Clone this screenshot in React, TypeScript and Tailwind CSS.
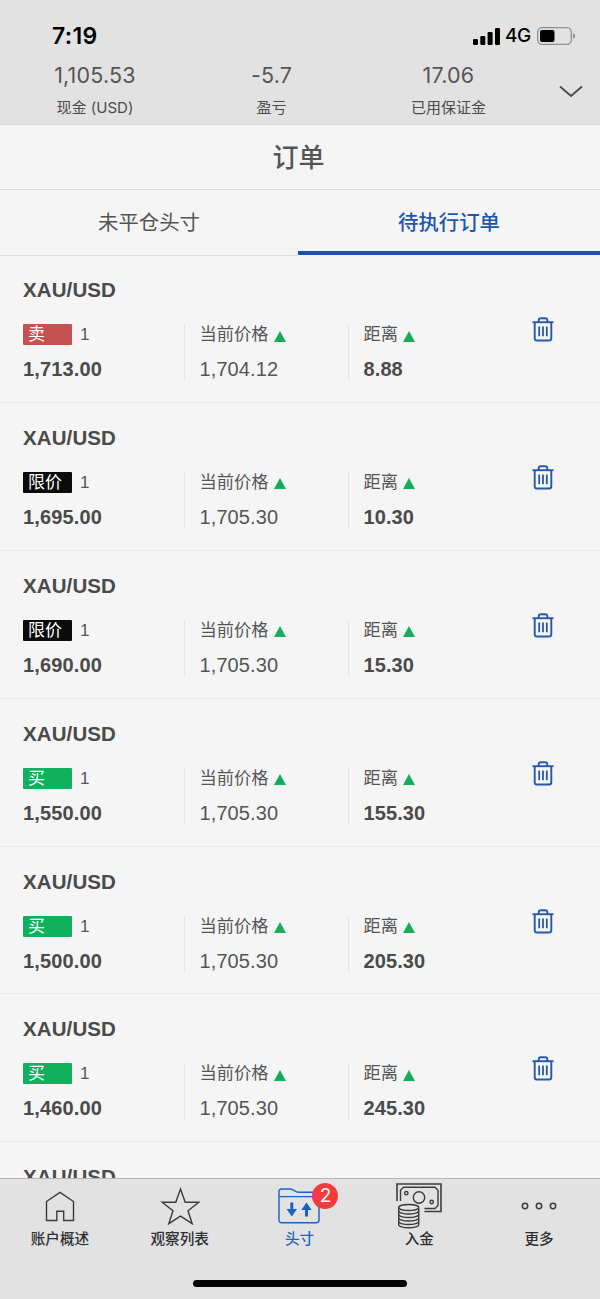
import type { ReactNode } from 'react'
import clsx from 'clsx'

type OrderKind = 'sell' | 'limit' | 'buy'

interface Order {
    kind: OrderKind
    price: string
    current: string
    distance: string
}

const orders: Order[] = [
    { kind: 'sell', price: '1,713.00', current: '1,704.12', distance: '8.88' },
    { kind: 'limit', price: '1,695.00', current: '1,705.30', distance: '10.30' },
    { kind: 'limit', price: '1,690.00', current: '1,705.30', distance: '15.30' },
    { kind: 'buy', price: '1,550.00', current: '1,705.30', distance: '155.30' },
    { kind: 'buy', price: '1,500.00', current: '1,705.30', distance: '205.30' },
    { kind: 'buy', price: '1,460.00', current: '1,705.30', distance: '245.30' },
]

const kinds = {
    sell: { label: '卖', bg: 'bg-[#c65052]' },
    limit: { label: '限价', bg: 'bg-[#0b0b0b]' },
    buy: { label: '买', bg: 'bg-[#10b05c]' },
}

function StatusBar() {
    return (
        <div className="flex h-[54px] items-start justify-between pt-[22px] pr-[24px] pl-[52px] text-black">
            <span className="text-[23px] leading-7 font-semibold tracking-[0.3px]">7:19</span>
            <div className="flex h-7 items-center">
                <svg width="27" height="17" viewBox="0 0 27 17" fill="currentColor">
                    <rect x="0" y="11" width="5" height="6" rx="1.2" />
                    <rect x="7.3" y="8" width="5" height="9" rx="1.2" />
                    <rect x="14.6" y="4" width="5" height="13" rx="1.2" />
                    <rect x="22" y="0" width="5" height="17" rx="1.2" />
                </svg>
                <span className="ml-[5px] w-[26px] text-[19px] leading-7 font-medium tracking-[-0.5px]">4G</span>
                <svg className="ml-[6px]" width="39" height="18" viewBox="0 0 39 18">
                    <rect x="0.7" y="0.7" width="33.6" height="16.6" rx="4.5" fill="none" stroke="#8f8f8f" strokeWidth="1.3" />
                    <rect x="3" y="3" width="14.5" height="12" rx="2" fill="#000" />
                    <path d="M36 6.2c1.6.6 2.2 1.6 2.2 2.8s-.6 2.2-2.2 2.8z" fill="#8f8f8f" />
                </svg>
            </div>
        </div>
    )
}

function Stat({ value, label, className }: { value: string; label: string; className: string }) {
    return (
        <div className={clsx('flex flex-col items-center text-[#555]', className)}>
            <span className="h-[43px] text-[21.5px] leading-[43px] tracking-[0.2px]">{value}</span>
            <span className="text-[15px] leading-[22px] whitespace-nowrap text-[#4c4c4c]">{label}</span>
        </div>
    )
}

function AccountSummary() {
    return (
        <div className="flex h-[70px]">
            <Stat className="w-[190px]" value="1,105.53" label="现金 (USD)" />
            <Stat className="w-[163px]" value="-5.7" label="盈亏" />
            <Stat className="w-[191px]" value="17.06" label="已用保证金" />
            <svg className="mt-[31px] ml-[15px]" width="24" height="13" viewBox="0 0 24 13" fill="none" stroke="#4a4a4a" strokeWidth="1.8">
                <path d="M1 1.5 12 11 23 1.5" />
            </svg>
        </div>
    )
}

function UpArrow() {
    return (
        <svg width="12" height="11" viewBox="0 0 12 11" fill="#17ab5b">
            <path d="M6 0 12 11H0z" />
        </svg>
    )
}

function TrashIcon() {
    return (
        <svg width="22" height="25" viewBox="0 0 22 25" fill="none" stroke="#2459a9" strokeWidth="1.9">
            <path d="M0.5 5.2h21" />
            <path d="M6.7 5V3.5c0-1.4.8-2.3 2.2-2.3h4.2c1.4 0 2.2.9 2.2 2.3V5" />
            <path d="M2.7 5.2v16.3c0 1.3.7 2 2 2h12.600c1.300 0 2-.7 2-2V5.200" />
            <path d="M7.200 9.500v9.800M11 9.500v9.800M14.800 9.500v9.800" strokeWidth="1.8" />
        </svg>
    )
}

function Quote({ label, value, bold, className }: { label: string; value: string; bold?: boolean; className?: string }) {
    return (
        <div className={clsx('border-l border-[#e6e6e6] pl-[14.5px]', className)}>
            <div className="flex h-[21px] items-center gap-[5px] text-[17.3px] text-[#555]">
                <span className="leading-[21px]">{label}</span>
                <span className="pt-[3px]"><UpArrow /></span>
            </div>
            <div className={clsx('mt-3.5 h-5 text-[20px] leading-5', bold ? 'font-bold tracking-[0.1px] text-[#4a4a4a]' : 'tracking-[0.1px] text-[#555]')}>
                {value}
            </div>
        </div>
    )
}

function OrderRow({ order }: { order: Order }) {
    const kind = kinds[order.kind]

    return (
        <li className="flex h-[147.9px] shrink-0 border-b border-[#eaeaea] pl-[23px] font-['Liberation_Sans','Noto_Sans_CJK_SC',sans-serif]">
            <div className="w-[508.5px] pt-[25px]">
                <div className="text-[20.5px] leading-5 font-bold tracking-[0.1px] text-[#4a4a4a]">XAU/USD</div>
                <div className="mt-6 flex h-[57px]">
                    <div className="w-[161px]">
                        <div className="flex h-[21px] items-center gap-2">
                            <span className={clsx('h-[21px] w-[49px] rounded-[1px] pl-[5px] text-[17px] leading-[21px] text-white', kind.bg)}>
                                {kind.label}
                            </span>
                            <span className="text-[17px] leading-[21px] text-[#555]">1</span>
                        </div>
                        <div className="mt-3.5 text-[20px] leading-5 font-bold tracking-[0.15px] text-[#4a4a4a]">{order.price}</div>
                    </div>
                    <Quote className="w-[164px]" label="当前价格" value={order.current} />
                    <Quote label="距离" value={order.distance} bold />
                </div>
            </div>
            <button className="mt-[62px] h-[25px]" aria-label="delete">
                <TrashIcon />
            </button>
        </li>
    )
}

function HomeIcon() {
    return (
        <svg width="30" height="32" viewBox="0 0 30 32" fill="none" stroke="#3c3c3f" strokeWidth="1.4">
            <path d="M1.5 11.500 15 2.300l13.500 9.200v19H18.700v-9.200h-6.900v9.200H1.500z" />
        </svg>
    )
}

function StarIcon() {
    return (
        <svg width="40" height="38" viewBox="0 0 40 38" fill="none" stroke="#3c3c3f" strokeWidth="1.4">
            <path d="m20.500 2 4.700 13.200h13.700L28 23.700l4.200 13-11.700-7.500-11.700 7.500 4.200-13L2.100 15.200h13.700z" />
        </svg>
    )
}

function PositionsIcon() {
    return (
        <svg width="42" height="36" viewBox="0 0 42 36" fill="none" stroke="#1a61c7" strokeWidth="1.4">
            <path d="M1 9V3.500C1 2 1.800 1 3.300 1H12c1.800 0 3 .5 4.500 1.700S19 4.200 21 4.200h20V32c0 1.800-.9 2.700-2.700 2.700H3.700C1.900 34.700 1 33.800 1 32V8.600h40" />
            <path d="M12.300 14.500h3v6.500h3.700l-5.200 7.500L8.600 21h3.700zM27 28.500h3V22h3.700l-5.200-7.500L23.300 22H27z" fill="#1a61c7" stroke="none" />
        </svg>
    )
}

function DepositIcon() {
    return (
        <svg width="46" height="46" viewBox="0 0 46 46" fill="none" stroke="#3c3c3f" strokeWidth="1.4">
            <path d="M1 18V1h44v27.500H28.500" strokeWidth="1.6" />
            <path d="M4.500 18V7.300l3-3H39l3 3v15.200l-3 3H28.500" />
            <circle cx="23" cy="14.500" r="5.700" />
            <circle cx="10.300" cy="10.200" r="1.700" />
            <circle cx="35.700" cy="19" r="1.700" />
            <ellipse cx="12.700" cy="24.500" rx="10" ry="3" />
            <path d="M2.700 24.500v17.300c0 1.600 4.500 3 10 3s10-1.400 10-3V24.500" />
            <path d="M2.700 28c0 1.600 4.500 3 10 3s10-1.400 10-3M2.700 31.500c0 1.600 4.500 3 10 3s10-1.400 10-3M2.700 35c0 1.600 4.500 3 10 3s10-1.400 10-3M2.700 38.500c0 1.600 4.500 3 10 3s10-1.400 10-3" />
        </svg>
    )
}

function MoreIcon() {
    return (
        <svg width="36" height="8" viewBox="0 0 36 8" fill="none" stroke="#3c3c3f" strokeWidth="1.5">
            <circle cx="4" cy="4" r="2.700" />
            <circle cx="18" cy="4" r="2.700" />
            <circle cx="32" cy="4" r="2.700" />
        </svg>
    )
}

interface NavItemProps {
    icon: ReactNode
    label: string
    active?: boolean
    badge?: number
}

function NavItem({ icon, label, active, badge }: NavItemProps) {
    return (
        <div className={clsx('flex flex-1 flex-col items-center', active ? 'text-[#1f62c0]' : 'text-[#2f2f32]')}>
            <div className="relative mt-1 flex h-[46px] items-center justify-center">
                {icon}
                {badge && (
                    <span className="absolute top-0 -right-[18px] h-[26px] w-[26px] rounded-full bg-[#f73b3b] text-center text-[19px] leading-[26px] text-white">
                        {badge}
                    </span>
                )}
            </div>
            <span className="text-[14.6px] leading-[20px] font-medium">{label}</span>
        </div>
    )
}

export default function App() {
    return (
        <div className="flex h-[1299px] w-[600px] flex-col overflow-hidden bg-[#f5f5f5] font-[Inter,'Noto_Sans_CJK_SC',sans-serif]">
            <header className="h-[125px] shrink-0 border-b border-[#d6d6d6] bg-[#e2e2e2]">
                <StatusBar />
                <AccountSummary />
            </header>
            <h1 className="h-[65px] shrink-0 border-b border-[#d9d9d9] pr-[3px] text-center text-[26px] leading-[65px] font-medium text-[#555]">订单</h1>
            <div className="flex h-[65px] shrink-0 text-center text-[20.4px] leading-[65px]">
                <div className="h-[66px] w-[298px] border-b border-[#dedede] text-[#555]">未平仓头寸</div>
                <div className="w-[302px] border-b-4 border-[#1d52ac] font-medium text-[#1d55ae]">待执行订单</div>
            </div>
            <ul className="flex min-h-0 flex-1 flex-col overflow-hidden">
                {orders.map((order) => (
                    <OrderRow key={order.price} order={order} />
                ))}
                <li className="pt-[25px] pl-[23px] font-['Liberation_Sans',sans-serif] text-[20.5px] leading-5 font-bold tracking-[0.1px] text-[#4a4a4a]">
                    XAU/USD
                </li>
            </ul>
            <nav className="h-[121px] shrink-0 border-t border-[#b5b5b5] bg-[#e2e2e3]">
                <div className="flex h-[101px] w-[599px]">
                    <NavItem icon={<HomeIcon />} label="账户概述" />
                    <NavItem icon={<StarIcon />} label="观察列表" />
                    <NavItem icon={<PositionsIcon />} label="头寸" active badge={2} />
                    <NavItem icon={<DepositIcon />} label="入金" />
                    <NavItem icon={<MoreIcon />} label="更多" />
                </div>
                <div className="mx-auto h-[7px] w-[214px] rounded-full bg-black" />
            </nav>
        </div>
    )
}
